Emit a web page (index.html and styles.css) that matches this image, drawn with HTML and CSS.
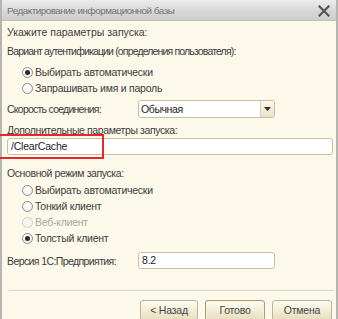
FILE: index.html
```html
<!DOCTYPE html>
<html lang="ru">
<head>
<meta charset="utf-8">
<title>Редактирование информационной базы</title>
<link rel="stylesheet" href="styles.css">
</head>
<body>
<div class="window">
  <div class="titlebar">
    <span class="title">Редактирование информационной базы</span>
    <svg class="close" width="12" height="12" viewBox="0 0 12 12"><path d="M1.5 1.5 L10.5 10.5 M10.5 1.5 L1.5 10.5" stroke="#555" stroke-width="2.2" stroke-linecap="square"/></svg>
  </div>
  <div class="content">
    <div class="row r-head">Укажите параметры запуска:</div>
    <div class="row r-auth">Вариант аутентификации (определения пользователя):</div>
    <div class="radios radios-auth">
      <div class="radio checked"><span class="dot"></span>Выбирать автоматически</div>
      <div class="radio"><span class="dot"></span>Запрашивать имя и пароль</div>
    </div>
    <div class="field-row r-speed">
      <span class="label label-speed">Скорость соединения:</span>
      <div class="select"><span class="select-text">Обычная</span><span class="select-btn"><svg width="7" height="4" viewBox="0 0 7 4"><path d="M0 0 H7 L3.5 4 Z" fill="#3a2e10"/></svg></span></div>
    </div>
    <div class="row r-params">Дополнительные параметры запуска:</div>
    <div class="params-wrap">
      <div class="input wide">/ClearCache</div>
      <div class="highlight"></div>
    </div>
    <div class="row r-mode">Основной режим запуска:</div>
    <div class="radios radios-mode">
      <div class="radio"><span class="dot"></span>Выбирать автоматически</div>
      <div class="radio"><span class="dot"></span>Тонкий клиент</div>
      <div class="radio disabled"><span class="dot"></span>Веб-клиент</div>
      <div class="radio checked"><span class="dot"></span>Толстый клиент</div>
    </div>
    <div class="field-row r-version">
      <span class="label label-version">Версия 1С:Предприятия:</span>
      <div class="input short">8.2</div>
    </div>
    <div class="separator"></div>
    <div class="buttons">
      <div class="btn btn-back">&lt; Назад</div>
      <div class="btn btn-default">Готово</div>
      <div class="btn">Отмена</div>
    </div>
  </div>
</div>
</body>
</html>
```
FILE: styles.css
```css
* { box-sizing: border-box; }
html, body { margin: 0; padding: 0; }
body {
  width: 338px;
  height: 319px;
  overflow: hidden;
  font-family: "Liberation Sans", Arial, sans-serif;
  font-size: 10.5px;
  letter-spacing: -0.4px;
  color: #3c3c3c;
  background: #fcf9ea;
}
.window {
  width: 338px;
  height: 319px;
  border-left: 2px solid #b4b4b0;
  border-right: 2px solid #b4b4b0;
  display: flex;
  flex-direction: column;
  background: #fcf9ea;
}
.titlebar {
  height: 21px;
  flex: none;
  display: flex;
  align-items: center;
  justify-content: space-between;
  padding: 0 6px 0 5px;
  background: linear-gradient(#ececec, #d6d6d6 60%, #cdcdcd);
  border-bottom: 1px solid #c4c2b8;
}
.title { color: #727272; font-size: 9.8px; letter-spacing: -0.45px; }
.close { margin-top: 1px; }
.content {
  position: relative;
  padding: 0 4px 0 5px;
  display: flex;
  flex-direction: column;
}
.row { height: 16px; line-height: 16px; white-space: nowrap; }
.r-head { height: 20px; line-height: 20px; margin-top: 1px; letter-spacing: 0; }
.r-auth { height: 18px; line-height: 18px; letter-spacing: -0.85px; }
.radios { display: flex; flex-direction: column; padding-left: 15px; }
.radios-auth { margin-top: 4px; }
.radios-mode { margin-top: 1px; }
.radio { height: 16px; display: flex; align-items: center; white-space: nowrap; letter-spacing: -0.25px; }
.radio .dot {
  width: 11px; height: 11px;
  border-radius: 50%;
  border: 1px solid #8c8c8c;
  background: radial-gradient(circle at 40% 35%, #ffffff, #ecebe6);
  margin-right: 2px;
  display: flex; align-items: center; justify-content: center;
  flex: none;
}
.radio.checked .dot::after {
  content: "";
  width: 5px; height: 5px; border-radius: 50%;
  background: #2a2a2a;
}
.radio.disabled { color: #a8a8a4; }
.radio.disabled .dot { border-color: #cfcfca; background: #f7f5ee; }
.field-row { display: flex; align-items: center; }
.field-row .label { width: 131px; flex: none; }
.label-speed { letter-spacing: -0.75px; }
.label-version { letter-spacing: -0.6px; }
.r-speed { margin-top: 4px; height: 18px; }
.select {
  width: 137px; height: 18px;
  border: 1px solid #c7bf9f;
  border-radius: 3px;
  background: #fff;
  display: flex;
  overflow: hidden;
}
.select-text { flex: 1; padding-left: 2px; line-height: 16px; color: #222; }
.select-btn {
  width: 14px;
  border-left: 1px solid #d6cfb4;
  background: linear-gradient(#fbf8ee, #e9e2c8);
  display: flex; align-items: center; justify-content: center;
}
.r-params { margin-top: 4px; }
.params-wrap { position: relative; }
.input {
  height: 17px;
  border: 1px solid #c9c1a4;
  border-radius: 3px;
  background: #fff;
  padding-left: 3px;
  line-height: 15px;
  color: #222;
  letter-spacing: -0.2px;
}
.input.wide { width: 326px; }
.input.short { width: 137px; }
.highlight {
  position: absolute;
  left: -9px; top: -4px;
  width: 106px; height: 25px;
  border: 2px solid #e8262c;
  pointer-events: none;
}
.r-mode { margin-top: 10px; }
.r-version { margin-top: 6px; height: 17px; }
.separator {
  margin-top: 21px;
  height: 2px;
  width: 325px;
  margin-left: 2px;
  border-top: 1px solid #d9d1b6;
  border-bottom: 1px solid #ffffff;
}
.buttons {
  margin-top: 8px;
  display: flex;
  justify-content: flex-end;
  gap: 7px;
}
.btn {
  width: 60px; height: 21px;
  border: 1px solid #bdb391;
  border-radius: 3px;
  background: linear-gradient(#fefcf4, #f3edd8 50%, #e6dec0);
  text-align: center;
  line-height: 19px;
  color: #444;
  letter-spacing: -0.2px;
}
.btn-back { width: 58px; }
.btn-default { border-color: #a89c74; box-shadow: inset 0 0 0 1px #f6f0da; }
```
